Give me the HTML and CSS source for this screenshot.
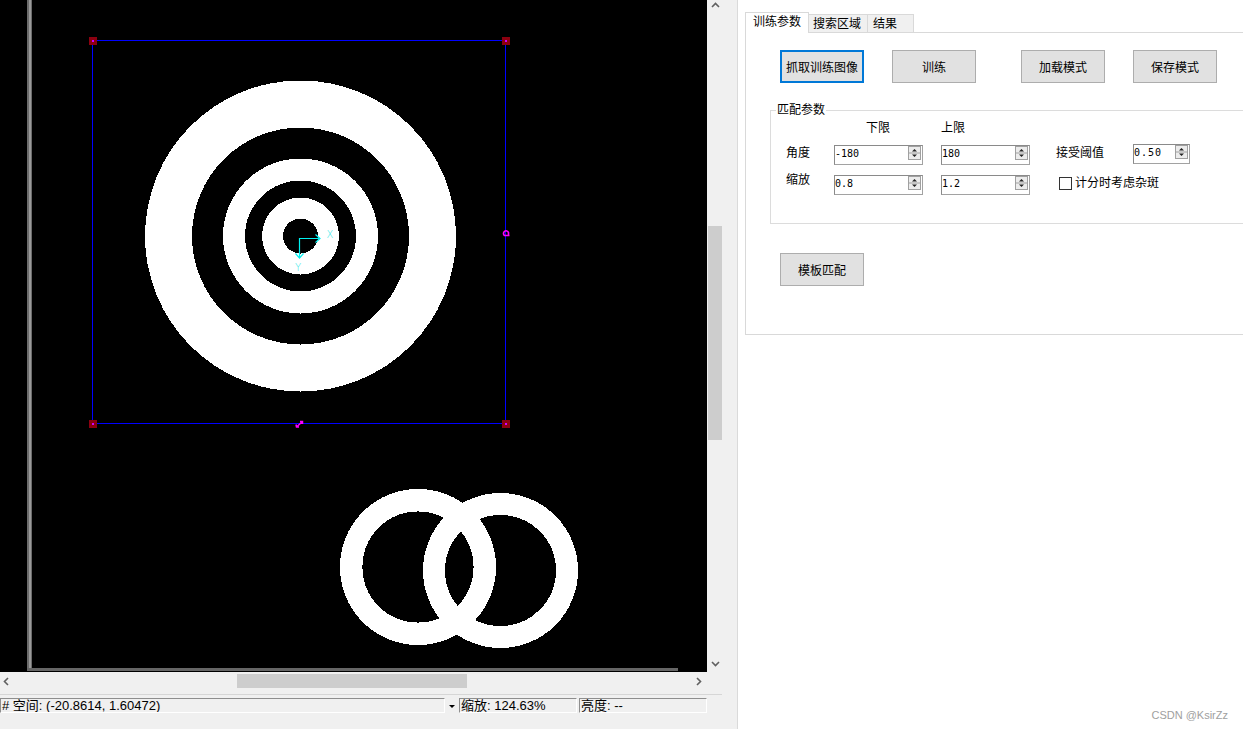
FILE: index.html
```html
<!DOCTYPE html>
<html lang="zh-CN">
<head>
<meta charset="utf-8">
<title>模板匹配</title>
<link rel="stylesheet" href="styles.css">
</head>
<body>
<div class="app">
  <div class="left">
    <div class="view-row">
      <div class="canvas">
        <svg class="scene" width="707" height="672" viewBox="0 0 707 672">
          <rect width="707" height="672" fill="#000"/>
          <rect x="27" y="0" width="5" height="671" fill="#6c6c6c"/>
          <rect x="29" y="0" width="2" height="668" fill="#9a9a9a"/>
          <rect x="27" y="668" width="651" height="3" fill="#666"/>
          <g shape-rendering="crispEdges">
            <circle cx="300.5" cy="236" r="155.5" fill="#fff"/>
            <circle cx="300.5" cy="236" r="108.5" fill="#000"/>
            <circle cx="300.5" cy="236" r="77.5" fill="#fff"/>
            <circle cx="300.5" cy="236" r="55.5" fill="#000"/>
            <circle cx="300.5" cy="236" r="38.5" fill="#fff"/>
            <circle cx="300.5" cy="236" r="17.5" fill="#000"/>
            <circle cx="418" cy="567" r="66.8" fill="none" stroke="#fff" stroke-width="22.5"/>
            <circle cx="500.5" cy="570.5" r="66.5" fill="none" stroke="#fff" stroke-width="22"/>
          </g>
          <rect x="92.5" y="40.5" width="413" height="383" fill="none" stroke="#0000ff"/>
          <rect x="89" y="37" width="8" height="8" fill="#8c0010"/>
          <rect x="92" y="40" width="2" height="2" fill="#d000ff"/>
          <rect x="502" y="37" width="8" height="8" fill="#8c0010"/>
          <rect x="505" y="40" width="2" height="2" fill="#d000ff"/>
          <rect x="89" y="420" width="8" height="8" fill="#8c0010"/>
          <rect x="92" y="423" width="2" height="2" fill="#d000ff"/>
          <rect x="502" y="420" width="8" height="8" fill="#8c0010"/>
          <rect x="505" y="423" width="2" height="2" fill="#d000ff"/>
          <path d="M509.5 235.5 L504.5 235.5 A2.6 2.6 0 1 1 508.5 232.5 L508.5 235.5" fill="none" stroke="#ff00ff" stroke-width="1.6"/>
          <path d="M296.5 427 L302.5 421.5 M296 424.5 L296.5 427 L299 427 M300 421.5 L302.5 421.5 L302.5 424" fill="none" stroke="#ff00ff" stroke-width="1.5"/>
          <path d="M299.5 238 V258 M299 238.5 H320" stroke="#00f0f0" stroke-width="1.2" fill="none"/>
          <path d="M315.5 234.5 L320 238.5 L315.5 242.5" stroke="#00f0f0" stroke-width="1.2" fill="none"/>
          <path d="M295.5 253.5 L299.5 258 L303.5 253.5" stroke="#00f0f0" stroke-width="1.2" fill="none"/>
          <text x="326.5" y="238" class="axis">X</text>
          <text x="295" y="271" class="axis">Y</text>
        </svg>
      </div>
      <div class="vscroll">
        <div class="arrow top"><svg width="9" height="6" viewBox="0 0 9 6"><path d="M1 5 L4.5 1.5 L8 5" fill="none" stroke="#606060" stroke-width="1.6"/></svg></div>
        <div class="vtrack"><div class="vthumb"></div></div>
        <div class="arrow"><svg width="9" height="6" viewBox="0 0 9 6"><path d="M1 1 L4.5 4.5 L8 1" fill="none" stroke="#606060" stroke-width="1.6"/></svg></div>
      </div>
    </div>
    <div class="hrow">
      <div class="hscroll">
        <div class="harrow left-a"><svg width="6" height="9" viewBox="0 0 6 9"><path d="M5 1 L1.5 4.5 L5 8" fill="none" stroke="#606060" stroke-width="1.6"/></svg></div>
        <div class="htrack"><div class="hthumb"></div></div>
        <div class="harrow"><svg width="6" height="9" viewBox="0 0 6 9"><path d="M1 1 L4.5 4.5 L1 8" fill="none" stroke="#606060" stroke-width="1.6"/></svg></div>
      </div>
    </div>
    <div class="status">
      <div class="field f1"># 空间: (-20.8614, 1.60472)</div>
      <div class="dd"><span class="tri"></span></div>
      <div class="field f2">缩放: 124.63%</div>
      <div class="field f3">亮度: --</div>
    </div>
  </div>

  <div class="right">
    <div class="tabs">
      <div class="tab active">训练参数</div>
      <div class="tab t2">搜索区域</div>
      <div class="tab t3">结果</div>
    </div>
    <div class="panel">
      <div class="btnrow">
        <div class="btn focus">抓取训练图像</div>
        <div class="btn b2">训练</div>
        <div class="btn b3">加载模式</div>
        <div class="btn b4">保存模式</div>
      </div>
      <div class="group">
        <span class="legend">匹配参数</span>
        <div class="grow head">
          <span class="c2 hl">下限</span>
          <span class="c4">上限</span>
        </div>
        <div class="grow r1">
          <span class="lbl">角度</span>
          <div class="spin"><span class="val">-180</span><svg class="sb" width="13" height="14" viewBox="0 0 13 14"><rect x=".5" y=".5" width="12" height="13" fill="#ececec" stroke="#a0a0a0"/><line x1="1" y1="7" x2="12" y2="7" stroke="#a0a0a0"/><path d="M4 5.5h5L6.5 3z" fill="#222"/><path d="M4 8.5h5l-2.5 2.5z" fill="#222"/></svg></div>
          <span></span>
          <div class="spin"><span class="val">180</span><svg class="sb" width="13" height="14" viewBox="0 0 13 14"><rect x=".5" y=".5" width="12" height="13" fill="#ececec" stroke="#a0a0a0"/><line x1="1" y1="7" x2="12" y2="7" stroke="#a0a0a0"/><path d="M4 5.5h5L6.5 3z" fill="#222"/><path d="M4 8.5h5l-2.5 2.5z" fill="#222"/></svg></div>
          <span></span>
          <span class="lbl">接受阈值</span>
          <div class="spin s3"><span class="val wide">0.50</span><svg class="sb" width="13" height="14" viewBox="0 0 13 14"><rect x=".5" y=".5" width="12" height="13" fill="#ececec" stroke="#a0a0a0"/><line x1="1" y1="7" x2="12" y2="7" stroke="#a0a0a0"/><path d="M4 5.5h5L6.5 3z" fill="#222"/><path d="M4 8.5h5l-2.5 2.5z" fill="#222"/></svg></div>
        </div>
        <div class="grow r2">
          <span class="lbl up">缩放</span>
          <div class="spin"><span class="val">0.8</span><svg class="sb" width="13" height="14" viewBox="0 0 13 14"><rect x=".5" y=".5" width="12" height="13" fill="#ececec" stroke="#a0a0a0"/><line x1="1" y1="7" x2="12" y2="7" stroke="#a0a0a0"/><path d="M4 5.5h5L6.5 3z" fill="#222"/><path d="M4 8.5h5l-2.5 2.5z" fill="#222"/></svg></div>
          <span></span>
          <div class="spin"><span class="val">1.2</span><svg class="sb" width="13" height="14" viewBox="0 0 13 14"><rect x=".5" y=".5" width="12" height="13" fill="#ececec" stroke="#a0a0a0"/><line x1="1" y1="7" x2="12" y2="7" stroke="#a0a0a0"/><path d="M4 5.5h5L6.5 3z" fill="#222"/><path d="M4 8.5h5l-2.5 2.5z" fill="#222"/></svg></div>
          <span></span>
          <label class="chk"><span class="box"></span><span>计分时考虑杂斑</span></label>
        </div>
      </div>
      <div class="btn match">模板匹配</div>
    </div>
  </div>
  <div class="watermark">CSDN @KsirZz</div>
</div>
</body>
</html>
```

FILE: styles.css
```css
* { box-sizing: border-box; margin: 0; padding: 0; }
html, body { width: 1243px; height: 729px; overflow: hidden; background: #fff; }
body {
  font-family: "Liberation Sans", "Noto Sans CJK SC", sans-serif;
  font-size: 12px;
  color: #000;
}
.app { display: flex; width: 1243px; height: 729px; position: relative; }

/* left pane */
.left {
  width: 738px;
  flex: none;
  background: #f0f0f0;
  border-right: 1px solid #dadada;
  display: flex;
  flex-direction: column;
}
.view-row { display: flex; height: 672px; }
.canvas { width: 707px; height: 672px; background: #000; }
.scene { display: block; }
.axis { font-family: "DejaVu Sans", sans-serif; font-size: 10px; fill: #30e8e8; font-weight: 300; }

.vscroll { width: 16px; display: flex; flex-direction: column; }
.arrow { height: 17px; display: flex; justify-content: center; align-items: center; }
.arrow.top { align-items: flex-start; padding-top: 2px; }
.arrow svg, .harrow svg { display: block; }
.vtrack { flex: 1; padding: 0 1px; }
.vthumb { margin-top: 209px; height: 214px; background: #cdcdcd; }

.hrow { display: flex; height: 18px; }
.hscroll { width: 707px; display: flex; }
.harrow { width: 17px; display: flex; align-items: center; justify-content: center; }
.harrow.left-a { justify-content: flex-start; padding-left: 3px; }
.htrack { flex: 1; padding-top: 2px; }
.hthumb { margin-left: 220px; width: 230px; height: 14px; background: #cdcdcd; }

.status {
  margin-top: 4px;
  width: 722px;
  border-top: 1px solid #d6d6d6;
  padding-top: 3px;
  display: flex;
  align-items: flex-start;
}
.field {
  height: 15px;
  border-top: 1px solid #8e8e8e;
  border-left: 1px solid #8e8e8e;
  border-bottom: 1px solid #fff;
  border-right: 1px solid #fff;
  font-size: 13px;
  line-height: 13px;
  padding-left: 1px;
  white-space: nowrap;
  overflow: hidden;
}
.f1 { width: 445px; }
.dd { width: 14px; height: 15px; display: flex; align-items: center; justify-content: center; }
.tri { width: 0; height: 0; border-left: 3px solid transparent; border-right: 3px solid transparent; border-top: 3px solid #000; margin-top: 2px; }
.f2 { width: 118px; }
.f3 { width: 128px; margin-left: 2px; }

/* right pane */
.right { flex: 1; overflow: hidden; padding: 12px 0 0 7px; }
.tabs { display: flex; align-items: flex-end; height: 20px; }
.tab {
  height: 18px;
  border: 1px solid #d9d9d9;
  border-bottom: none;
  background: #f0f0f0;
  line-height: 18px;
  white-space: nowrap;
  margin-left: -1px;
}
.tab.active {
  margin-left: 0;
  width: 64px;
  height: 21px;
  margin-bottom: -1px;
  background: #fff;
  position: relative;
  z-index: 1;
  line-height: 19px;
  padding-left: 7px;
}
.t2 { width: 60px; padding-left: 4px; }
.t3 { width: 47px; padding-left: 5px; }

.panel {
  width: 520px;
  height: 303px;
  border: 1px solid #d9d9d9;
  background: #fff;
}
.btnrow { display: flex; margin: 17px 0 0 34px; }
.btn {
  width: 84px;
  height: 33px;
  border: 1px solid #adadad;
  background: #e1e1e1;
  display: flex;
  align-items: center;
  justify-content: center;
  white-space: nowrap;
}
.btn.focus { border: 2px solid #0078d7; }
.b2 { margin-left: 28px; }
.b3 { margin-left: 45px; }
.b4 { margin-left: 28px; }

.group {
  position: relative;
  margin: 27px 0 0 24px;
  width: 490px;
  height: 114px;
  border: 1px solid #dcdcdc;
  padding: 9px 0 0 15px;
}
.legend {
  position: absolute;
  top: -9px;
  left: 5px;
  background: #fff;
  padding: 0 1px;
  line-height: 16px;
}
.grow {
  display: grid;
  grid-template-columns: 48px 89px 18px 89px 26px 77px 57px;
  align-items: start;
}
.head { height: 16px; line-height: 16px; }
.c2 { grid-column: 2; }
.c4 { grid-column: 4; }
.hl { padding-left: 32px; }
.r1 { margin-top: 9px; height: 20px; }
.r2 { margin-top: 10px; height: 20px; }
.lbl { line-height: 16px; }
.lbl.up { margin-top: -3px; }

.spin {
  height: 20px;
  border: 1px solid #a2a2a2;
  border-top-color: #8a8a8a;
  border-left-color: #8a8a8a;
  background: #fff;
  display: flex;
  align-items: flex-start;
}
.s3 { margin-top: -1px; }
.val {
  font-family: "DejaVu Sans Mono", monospace;
  font-size: 10px;
  line-height: 15px;
}
.val.wide { letter-spacing: 1px; }
.sb { display: block; margin-left: auto; margin-right: 1px; }

.chk { grid-column: 6 / 8; display: flex; align-items: center; padding-left: 3px; white-space: nowrap; line-height: 16px; }
.box { width: 13px; height: 13px; border: 1px solid #333; background: #fff; margin-right: 3px; }

.btn.match { margin: 29px 0 0 34px; }

.watermark {
  position: absolute;
  right: 15px;
  bottom: 8px;
  font-size: 11px;
  color: #a0a0a0;
  line-height: 12px;
}
```
